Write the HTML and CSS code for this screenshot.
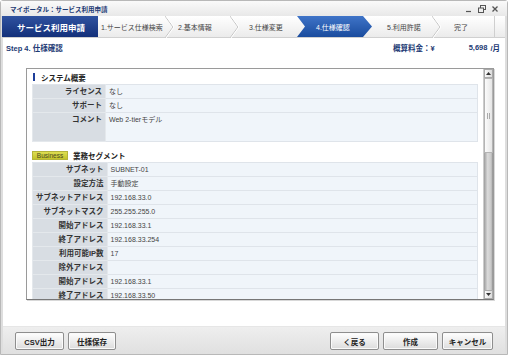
FILE: index.html
```html
<!DOCTYPE html>
<html lang="ja">
<head>
    <meta charset="UTF-8">
    <title>サービス利用申請</title>
    <link rel="stylesheet" href="styles.css">
</head>
<body>
    <div class="window">
        <div class="titlebar">
            <span class="title">マイポータル：サービス利用申請</span>
            <div class="controls">
                <svg width="8" height="8" viewBox="0 0 8 8"><path d="M1 6.5h5" stroke="#555" stroke-width="1.2"/></svg>
                <svg width="8" height="8" viewBox="0 0 8 8"><rect x="2.5" y="0.5" width="5" height="4" fill="none" stroke="#555"/><rect x="0.5" y="3" width="5" height="4.5" fill="#eee" stroke="#555"/></svg>
                <svg width="8" height="8" viewBox="0 0 8 8"><path d="M1.5 1.5l5 5M6.5 1.5l-5 5" stroke="#555" stroke-width="1.3"/></svg>
            </div>
        </div>

        <div class="steps">
            <div class="brand">サービス利用申請</div>
            <div class="step s1">1.サービス仕様検索</div>
            <svg class="chev" width="9" height="22" viewBox="0 0 9 22"><polyline points="0,0 8,11 0,22" fill="none" stroke="#c4c4c4"/><polyline points="1,0 9,11 1,22" fill="none" stroke="#fff"/></svg>
            <div class="step s2">2.基本情報</div>
            <svg class="chev" width="9" height="22" viewBox="0 0 9 22"><polyline points="0,0 8,11 0,22" fill="none" stroke="#c4c4c4"/><polyline points="1,0 9,11 1,22" fill="none" stroke="#fff"/></svg>
            <div class="step s3">3.仕様変更</div>
            <div class="step active">4.仕様確認</div>
            <div class="step s5">5.利用許諾</div>
            <svg class="chev" width="9" height="22" viewBox="0 0 9 22"><polyline points="0,0 8,11 0,22" fill="none" stroke="#c4c4c4"/><polyline points="1,0 9,11 1,22" fill="none" stroke="#fff"/></svg>
            <div class="step s6">完了</div>
        </div>

        <div class="page">
            <div class="stepinfo">
                <span class="step-title">Step 4. 仕様確認</span>
                <span class="fee">概算料金：¥</span>
                <span class="price">5,698</span>
                <span class="unit">/月</span>
            </div>

            <div class="panel">
                <div class="scroll-content">
                    <div class="section-head"><span class="bar"></span>システム概要</div>
                    <table class="spec">
                        <tr><th>ライセンス</th><td>なし</td></tr>
                        <tr><th>サポート</th><td>なし</td></tr>
                        <tr class="tall"><th>コメント</th><td>Web 2-tierモデル</td></tr>
                    </table>

                    <div class="section-head second"><span class="badge">Business</span>業務セグメント</div>
                    <table class="spec">
                        <tr><th>サブネット</th><td>SUBNET-01</td></tr>
                        <tr><th>設定方法</th><td>手動設定</td></tr>
                        <tr><th>サブネットアドレス</th><td>192.168.33.0</td></tr>
                        <tr><th>サブネットマスク</th><td>255.255.255.0</td></tr>
                        <tr><th>開始アドレス</th><td>192.168.33.1</td></tr>
                        <tr><th>終了アドレス</th><td>192.168.33.254</td></tr>
                        <tr><th>利用可能IP数</th><td>17</td></tr>
                        <tr><th>除外アドレス</th><td></td></tr>
                        <tr><th>開始アドレス</th><td>192.168.33.1</td></tr>
                        <tr><th>終了アドレス</th><td>192.168.33.50</td></tr>
                        <tr><th>&nbsp;</th><td></td></tr>
                    </table>
                </div>
                <div class="scrollbar">
                    <div class="sb-btn"><svg width="5" height="3" viewBox="0 0 5 3"><path d="M0 3L2.5 0L5 3z" fill="#333"/></svg></div>
                    <div class="sb-thumb"><span class="grip"></span></div>
                    <div class="sb-track"></div>
                    <div class="sb-btn"><svg width="5" height="3" viewBox="0 0 5 3"><path d="M0 0L2.5 3L5 0z" fill="#333"/></svg></div>
                </div>
            </div>
        </div>

        <div class="footer">
            <button class="btn w49">CSV出力</button>
            <button class="btn w48">仕様保存</button>
            <span class="spacer"></span>
            <button class="btn w49">く戻る</button>
            <button class="btn w55">作成</button>
            <button class="btn w51">キャンセル</button>
        </div>
    </div>
</body>
</html>
```

FILE: styles.css
```css
html, body {
    margin: 0;
    padding: 0;
}
body {
    width: 508px;
    height: 355px;
    overflow: hidden;
    font-family: "Liberation Sans", "Noto Sans CJK JP", sans-serif;
    color: #333;
    background: #fff;
}
.window {
    box-sizing: border-box;
    height: 355px;
    border: 1px solid #b8b8b8;
    border-radius: 3px 3px 0 0;
    background: #dedede;
    display: flex;
    flex-direction: column;
}
.titlebar {
    height: 15px;
    flex: none;
    display: flex;
    align-items: center;
    padding: 0 8px 0 9px;
    background: linear-gradient(#fafafa, #e8e8e8);
}
.title {
    font-size: 6.5px;
    font-weight: bold;
    color: #1d3a74;
    flex: 1;
}
.controls {
    display: flex;
    gap: 5px;
}
.steps {
    height: 22px;
    flex: none;
    display: flex;
    margin: 0 2px 0 1px;
    background: linear-gradient(#ffffff, #ebebeb);
    border-bottom: 1px solid #d0d0d0;
    box-sizing: border-box;
}
.brand {
    width: 96px;
    flex: none;
    background: linear-gradient(#2f52a0, #13307a);
    color: #fff;
    font-size: 8.5px;
    font-weight: bold;
    display: flex;
    align-items: center;
    justify-content: center;
    padding-left: 2px;
    box-sizing: border-box;
}
.step {
    flex: none;
    font-size: 7px;
    color: #444;
    display: flex;
    align-items: center;
    box-sizing: border-box;
    white-space: nowrap;
}
.chev {
    flex: none;
    display: block;
}
.s1 { width: 67px; padding-left: 3px; }
.s2 { width: 56px; padding-left: 4px; }
.s3 { width: 58px; padding-left: 10px; }
.active {
    width: 75px;
    padding-left: 19px;
    color: #fff;
    background: linear-gradient(#3f74c8, #1a4c9e);
    clip-path: polygon(0 0, calc(100% - 9px) 0, 100% 50%, calc(100% - 9px) 100%, 0 100%, 8px 50%);
}
.s5 { width: 60px; padding-left: 15px; }
.s6 {
    width: 54px;
    padding-left: 13px;
    border-right: 1px solid #cfcfcf;
}
.page {
    flex: 1;
    margin: 0 2px;
    background: #fff;
    display: flex;
    flex-direction: column;
    min-height: 0;
}
.stepinfo {
    height: 18px;
    flex: none;
    display: flex;
    align-items: center;
    padding: 0 5px 0 3px;
    font-size: 7.5px;
    font-weight: bold;
    color: #1d3a74;
}
.step-title {
    flex: 1;
}
.fee {
    margin-right: 34px;
}
.price {
    margin-right: 3px;
}
.panel {
    margin: 12px 11px 0 23px;
    height: 232px;
    box-sizing: border-box;
    border: 1px solid #9a9a9a;
    border-bottom-color: #777;
    box-shadow: 1px 1px 0 #d8d8d8;
    display: flex;
    overflow: hidden;
}
.scroll-content {
    flex: 1;
    padding: 1px 5px 0 5px;
    overflow: hidden;
}
.section-head {
    height: 14px;
    display: flex;
    align-items: center;
    font-size: 7.5px;
    font-weight: bold;
    color: #222;
}
.section-head.second {
    margin-top: 6px;
}
.bar {
    width: 2px;
    height: 8px;
    background: #1e3e9a;
    margin: 0 6px 0 1px;
}
.badge {
    width: 36px;
    height: 9px;
    box-sizing: border-box;
    background: linear-gradient(#dede52, #c2c22a);
    border: 1px solid #b4b43a;
    color: #4a4a20;
    font-size: 6.5px;
    font-weight: normal;
    display: flex;
    align-items: center;
    justify-content: center;
    margin-right: 5px;
}
.spec {
    width: 100%;
    border-collapse: collapse;
    font-size: 7px;
}
.spec th, .spec td {
    height: 13px;
    padding: 0 3px;
    border: 1px solid #dfe4ea;
    border-top: none;
    line-height: 13px;
    vertical-align: top;
}
.spec th {
    width: 66px;
    text-align: right;
    font-weight: bold;
    font-size: 7.5px;
    color: #333;
    background: #d8dde3;
    white-space: nowrap;
    border-color: #e4e8ec;
}
.spec td {
    background: #f0f5fa;
    color: #444;
}
.spec tr:first-child th, .spec tr:first-child td {
    border-top: 1px solid #dfe4ea;
}
.spec tr.tall th, .spec tr.tall td {
    height: 28px;
}
.scrollbar {
    width: 9px;
    flex: none;
    display: flex;
    flex-direction: column;
    background: #eee;
    border-left: 1px solid #ccc;
}
.sb-btn {
    height: 9px;
    flex: none;
    display: flex;
    align-items: center;
    justify-content: center;
    background: linear-gradient(90deg, #fafafa, #dcdcdc);
    border: 1px solid #aaa;
    box-sizing: border-box;
}
.sb-thumb {
    height: 75px;
    flex: none;
    box-sizing: border-box;
    border: 1px solid #b4b4b4;
    background: linear-gradient(90deg, #fbfbfb, #e6e6e6);
    display: flex;
    align-items: center;
    justify-content: center;
}
.grip {
    width: 3px;
    height: 6px;
    border-left: 1px solid #aaa;
    border-right: 1px solid #aaa;
    box-sizing: border-box;
}
.sb-track {
    flex: 1;
    background: linear-gradient(90deg, #9c9c9c, #dadada 40%, #c8c8c8 80%, #8c8c8c);
}
.footer {
    height: 28px;
    flex: none;
    display: flex;
    align-items: flex-start;
    gap: 4px;
    padding: 5px 12px 0 12px;
    box-sizing: border-box;
    margin: 0 2px;
    background: linear-gradient(#eeeeee, #e0e0e0);
    border-top: 1px solid #e6e6e6;
}
.spacer {
    flex: 1;
}
.btn {
    height: 18px;
    padding: 0;
    border: 1px solid #8e8e8e;
    border-radius: 2px;
    background: linear-gradient(#ffffff, #dcdcdc);
    font-family: "Liberation Sans", "Noto Sans CJK JP", sans-serif;
    font-size: 7.5px;
    font-weight: bold;
    color: #222;
    box-shadow: inset 0 0 0 1px #fafafa;
}
.w48 { width: 48px; }
.w49 { width: 49px; }
.w55 { width: 55px; }
.w51 { width: 51px; }
```
